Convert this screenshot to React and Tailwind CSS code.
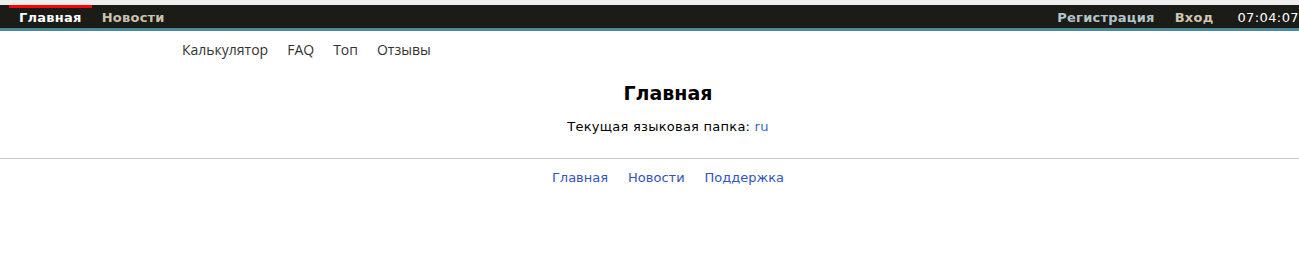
export default function App() {
  const dv = { fontFamily: '"DejaVu Sans", Verdana, sans-serif' };
  return (
    <div className="w-[1299px] h-[263px] bg-white overflow-hidden" style={dv}>
      <div className="h-[5px] bg-[#eeeeee]" />
      <div className="h-[23px] bg-[#1b1c18] flex items-center text-[13px] font-bold tracking-[0.25px]">
        <div className="relative ml-[9px] h-full flex items-center px-[10px] text-white">
          <span className="absolute left-0 right-0 top-0 h-[3px] bg-[#ff0000]" />
          <span className="pt-[2px]">Главная</span>
        </div>
        <div className="h-full flex items-center px-[10px] pt-[2px] text-[#c9c2ad]">Новости</div>
        <div className="flex-1" />
        <div className="h-full flex items-center pt-[2px] text-[#b4c4cc]">Регистрация</div>
        <div className="h-full flex items-center pl-[20px] pt-[2px] text-[#cfc7b0]">Вход</div>
        <div className="h-full flex items-center pl-[24px] pt-[2px] font-normal text-white tracking-[0.4px]">07:04:07</div>
      </div>
      <div className="h-[3px] bg-[#4b8a99]" />
      <div className="w-[972px] ml-[182px]">
        <div
          className="flex gap-[19px] pt-[8px] text-[14px] text-[#333333]"
          style={{ fontFamily: '"Open Sans", sans-serif' }}
        >
          <span>Калькулятор</span>
          <span>FAQ</span>
          <span>Топ</span>
          <span>Отзывы</span>
        </div>
        <h1 className="text-center text-[19px] font-bold text-black mt-[21px] leading-[24px]">Главная</h1>
        <p className="text-center text-[13px] text-black mt-[12px] tracking-[0.25px]">
          Текущая языковая папка: <span className="text-[#3366cc]">ru</span>
        </p>
      </div>
      <div className="mt-[21px] border-t border-[#cccccc]" />
      <div className="w-[972px] ml-[182px] flex justify-center gap-[20px] pt-[9px] text-[13px] text-[#3355bb]">
        <span>Главная</span>
        <span>Новости</span>
        <span>Поддержка</span>
      </div>
    </div>
  );
}
